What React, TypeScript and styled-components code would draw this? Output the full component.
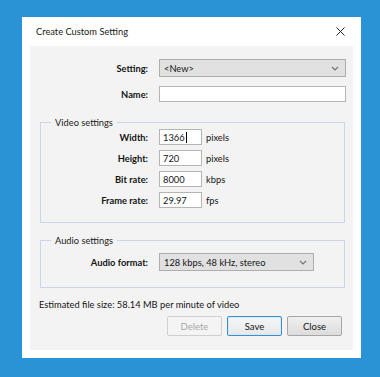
import React from "react";
import styled, { createGlobalStyle } from "styled-components";

const Global = createGlobalStyle`
  html, body {
    margin: 0;
    padding: 0;
    background: #2a93d6;
  }
  body {
    font-family: Lato, "Noto Sans", sans-serif;
    font-size: 9.3px;
    color: #141414;
  }
`;

const Page = styled.div`
  width: 380px;
  height: 377px;
  padding: 17px 19px 0 22px;
  box-sizing: border-box;
`;

const Dialog = styled.div`
  width: 339px;
  height: 341px;
  background: #ffffff;
  display: flex;
  flex-direction: column;
  box-sizing: border-box;
  padding: 0 8px 8px 8px;
`;

const TitleBar = styled.div`
  height: 29px;
  display: flex;
  align-items: center;
  justify-content: space-between;
  padding: 0 7px 0 6px;
`;

const Title = styled.span`
  color: #1a1a1a;
`;

const CloseX = styled.button`
  border: 0;
  background: transparent;
  width: 12px;
  height: 12px;
  padding: 0;
  display: flex;
  align-items: center;
  justify-content: center;
`;

const Panel = styled.div`
  flex: 1;
  background: #f3f3f3;
  padding: 13px 0 0 0;
  display: flex;
  flex-direction: column;
`;

const Row = styled.div<{ $labelWidth: number; $gap?: number }>`
  display: grid;
  grid-template-columns: ${(p) => p.$labelWidth}px auto auto 1fr;
  column-gap: 11px;
  align-items: center;
  margin-bottom: ${(p) => p.$gap ?? 0}px;
`;

const Label = styled.label`
  text-align: right;
  font-weight: 700;
  color: #141414;
`;

const Select = styled.div<{ $width: number }>`
  width: ${(p) => p.$width}px;
  height: 18px;
  box-sizing: border-box;
  border: 1px solid #adadad;
  background: #e1e1e1;
  display: flex;
  align-items: center;
  justify-content: space-between;
  padding: 0 6px 0 4px;
`;

const TextBox = styled.div<{ $width: number }>`
  width: ${(p) => p.$width}px;
  height: 16px;
  box-sizing: border-box;
  border: 1px solid #b5b5b5;
  background: #ffffff;
  display: flex;
  align-items: center;
  padding: 0 3px;
`;

const Caret = styled.span`
  display: inline-block;
  width: 1px;
  height: 11px;
  background: #000;
  margin-left: 1px;
`;

const Unit = styled.span`
  margin-left: -7px;
`;

const Group = styled.fieldset<{ $top: number; $padTop: number; $bottom: number }>`
  margin: ${(p) => p.$top}px 8px 0 10px;
  border: 1px solid #c9d6ea;
  padding: ${(p) => p.$padTop}px 0 ${(p) => p.$bottom}px 10px;
  min-inline-size: 0;
`;

const Legend = styled.legend`
  padding: 0 4px;
  color: #1a1a1a;
`;

const Rows = styled.div`
  display: flex;
  flex-direction: column;
  gap: 5px;
`;

const Estimate = styled.div`
  margin: 11px 0 0 9px;
`;

const Buttons = styled.div`
  display: flex;
  justify-content: flex-end;
  gap: 5px;
  margin: 6px 11px 0 0;
`;

const Button = styled.button<{ $variant?: "default" | "disabled" }>`
  width: 55px;
  height: 20px;
  box-sizing: border-box;
  font-family: inherit;
  font-size: 9.5px;
  padding: 0;
  border-radius: 2px;
  border: 1px solid
    ${(p) =>
      p.$variant === "default"
        ? "#3c8fcc"
        : p.$variant === "disabled"
        ? "#cfcfcf"
        : "#a6a6a6"};
  color: ${(p) => (p.$variant === "disabled" ? "#a8a8a8" : "#141414")};
  background: ${(p) =>
    p.$variant === "disabled"
      ? "#f4f4f4"
      : p.$variant === "default"
      ? "linear-gradient(#f4f6f8, #e6e8ea)"
      : "linear-gradient(#f0f0f0, #dcdcdc)"};
  box-shadow: ${(p) =>
    p.$variant === "default" ? "inset 0 0 0 1px #d4e8f6" : "none"};
`;

const Chevron = () => (
  <svg width="8" height="5" viewBox="0 0 8 5">
    <path d="M1 1 L4 4 L7 1" fill="none" stroke="#707070" strokeWidth="1.1" />
  </svg>
);

const videoRows = [
  { label: "Width:", value: "1366", unit: "pixels", caret: true },
  { label: "Height:", value: "720", unit: "pixels" },
  { label: "Bit rate:", value: "8000", unit: "kbps" },
  { label: "Frame rate:", value: "29.97", unit: "fps" },
];

export default function App() {
  return (
    <Page>
      <Global />
      <Dialog>
        <TitleBar>
          <Title>Create Custom Setting</Title>
          <CloseX aria-label="Close">
            <svg width="9" height="9" viewBox="0 0 9 9">
              <path d="M0.5 0.5 L8.5 8.5 M8.5 0.5 L0.5 8.5" stroke="#222" strokeWidth="1" />
            </svg>
          </CloseX>
        </TitleBar>
        <Panel>
          <Row $labelWidth={118} $gap={9}>
            <Label>Setting:</Label>
            <Select $width={187}>
              <span>&lt;New&gt;</span>
              <Chevron />
            </Select>
          </Row>
          <Row $labelWidth={118}>
            <Label>Name:</Label>
            <TextBox $width={187} />
          </Row>

          <Group $top={15} $padTop={1} $bottom={14}>
            <Legend>Video settings</Legend>
            <Rows>
              {videoRows.map((r) => (
                <Row key={r.label} $labelWidth={97}>
                  <Label>{r.label}</Label>
                  <TextBox $width={43}>
                    {r.value}
                    {r.caret && <Caret />}
                  </TextBox>
                  <Unit>{r.unit}</Unit>
                </Row>
              ))}
            </Rows>
          </Group>

          <Group $top={12} $padTop={7} $bottom={16}>
            <Legend>Audio settings</Legend>
            <Rows>
              <Row $labelWidth={97}>
                <Label>Audio format:</Label>
                <Select $width={155}>
                  <span>128 kbps, 48 kHz, stereo</span>
                  <Chevron />
                </Select>
              </Row>
            </Rows>
          </Group>

          <Estimate>Estimated file size: 58.14 MB per minute of video</Estimate>

          <Buttons>
            <Button $variant="disabled" disabled>
              Delete
            </Button>
            <Button $variant="default">Save</Button>
            <Button>Close</Button>
          </Buttons>
        </Panel>
      </Dialog>
    </Page>
  );
}
